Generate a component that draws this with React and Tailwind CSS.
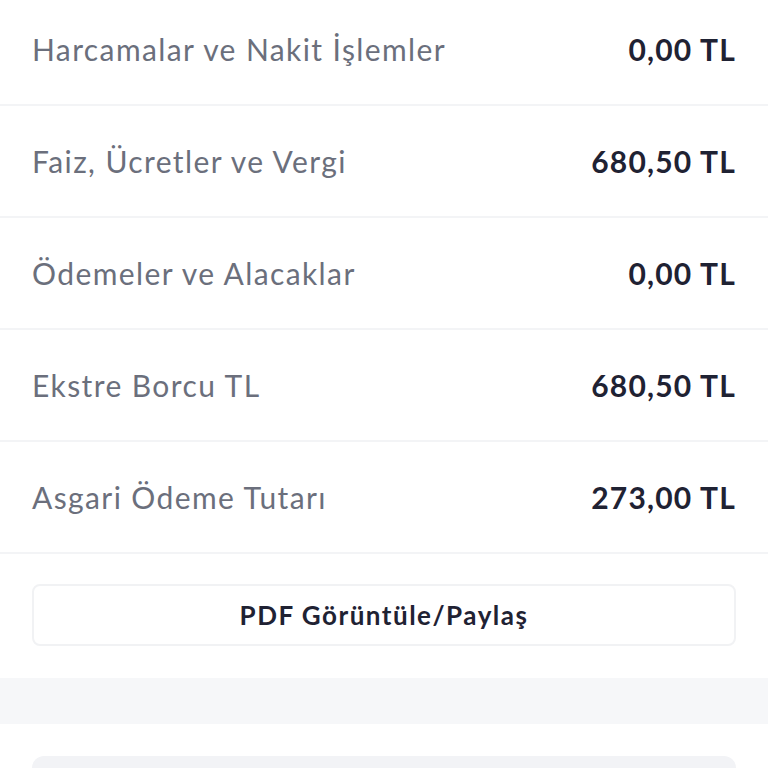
import React from 'react';

const rows = [
  { label: 'Harcamalar ve Nakit İşlemler', value: '0,00 TL' },
  { label: 'Faiz, Ücretler ve Vergi', value: '680,50 TL' },
  { label: 'Ödemeler ve Alacaklar', value: '0,00 TL' },
  { label: 'Ekstre Borcu TL', value: '680,50 TL' },
  { label: 'Asgari Ödeme Tutarı', value: '273,00 TL' },
];

const App = () => {
  return (
    <div
      className="w-[768px] h-[768px] overflow-hidden bg-white"
      style={{ fontFamily: 'Lato, "Noto Sans", sans-serif' }}
    >
      <div className="-mt-[6px]">
        {rows.map((r) => (
          <div
            key={r.label}
            className="h-[112px] flex items-center justify-between px-8 border-b-2 border-[#f3f4f6]"
          >
            <span className="text-[30px] tracking-[1.4px] text-[#6b6f7c]">{r.label}</span>
            <span className="text-[30px] tracking-[1.2px] font-bold text-[#1f2233]">{r.value}</span>
          </div>
        ))}
      </div>

      <div className="px-8 pt-[30px] pb-8">
        <button className="w-full h-[62px] rounded-lg border-2 border-[#f1f2f4] bg-white text-[26px] tracking-[1.5px] font-bold text-[#1f2233]">
          PDF Görüntüle/Paylaş
        </button>
      </div>

      <div className="h-[46px] bg-[#f6f7f9]" />

      <div className="px-8 pt-8">
        <div className="h-[60px] rounded-t-xl bg-[#f2f3f6]" />
      </div>
    </div>
  );
};

export default App;
